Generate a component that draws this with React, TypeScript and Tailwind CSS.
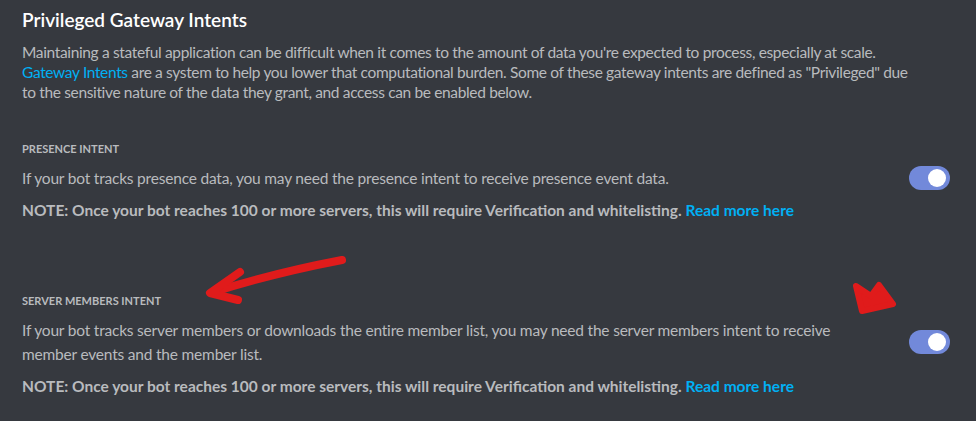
import React from "react";

function Toggle() {
  return (
    <div className="relative h-[24px] w-[41px] shrink-0 rounded-full bg-[#7289da]">
      <div className="absolute right-[4px] top-[3px] h-[18px] w-[18px] rounded-full bg-white" />
    </div>
  );
}

export default function App() {
  const body = "text-[15.5px] tracking-[-0.2px] leading-[20px] text-[#b9bbbe]";
  const note = "text-[15.5px] font-bold leading-[20px] text-[#b9bbbe]";
  return (
    <div
      className="relative h-[421px] w-[976px] overflow-hidden bg-[#36393f] pl-[22px] pr-[26px] pt-[7px]"
      style={{ fontFamily: 'Lato, "Noto Sans", sans-serif' }}
    >
      <h1 className="text-[19px] font-semibold leading-[26px] text-white">Privileged Gateway Intents</h1>
      <p className="mt-[9px] whitespace-nowrap text-[15.5px] leading-[20px] tracking-[-0.35px] text-[#b9bbbe]">
        Maintaining a stateful application can be difficult when it comes to the amount of data you're expected to process, especially at scale.
        <br />
        <span className="text-[#00b0f4]">Gateway Intents</span> are a system to help you lower that computational burden. Some of these gateway intents are defined as "Privileged" due
        <br />
        to the sensitive nature of the data they grant, and access can be enabled below.
      </p>

      <div className="mt-[39px]">
        <div className="text-[11px] font-bold uppercase leading-[16px] text-[#b9bbbe]">Presence Intent</div>
        <div className="mt-[9px] flex items-center justify-between">
          <p className={body}>If your bot tracks presence data, you may need the presence intent to receive presence event data.</p>
          <Toggle />
        </div>
        <p className={`mt-[10px] ${note}`}>
          NOTE: Once your bot reaches 100 or more servers, this will require Verification and whitelisting.{" "}
          <span className="text-[#00b0f4]">Read more here</span>
        </p>
      </div>

      <div className="mt-[73px]">
        <div className="text-[11px] font-bold uppercase leading-[16px] text-[#b9bbbe]">Server Members Intent</div>
        <div className="mt-[9px] flex items-center justify-between">
          <p className={`${body} w-[830px] leading-[24px]`}>
            If your bot tracks server members or downloads the entire member list, you may need the server members intent to receive member events and the member list.
          </p>
          <Toggle />
        </div>
        <p className={`mt-[10px] ${note}`}>
          NOTE: Once your bot reaches 100 or more servers, this will require Verification and whitelisting.{" "}
          <span className="text-[#00b0f4]">Read more here</span>
        </p>
      </div>

      <svg className="pointer-events-none absolute left-0 top-0" width="976" height="421" viewBox="0 0 976 421">
        <g stroke="#e01b1b" strokeLinecap="round" strokeLinejoin="round" fill="none">
          <path d="M342 260 C 300 268, 258 278, 214 292" strokeWidth="8" />
          <path d="M240 272 L210 293 L238 300" strokeWidth="8" />
        </g>
        <path
          d="M856 286 L871 296 L879 285 L893 304 L862 311 Z"
          fill="#e01b1b"
          stroke="#e01b1b"
          strokeWidth="6"
          strokeLinejoin="round"
        />
      </svg>
    </div>
  );
}
